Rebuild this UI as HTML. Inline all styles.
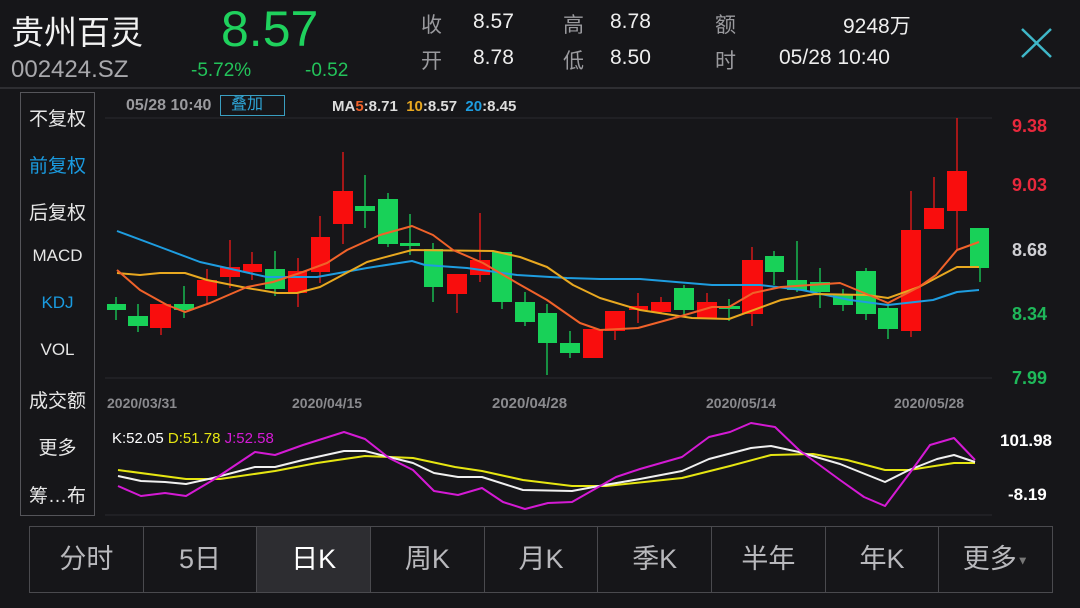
<!DOCTYPE html>
<html><head><meta charset="utf-8"><style>
*{margin:0;padding:0;box-sizing:border-box}
body{width:1080px;height:608px;background:#161619;overflow:hidden;position:relative;font-family:"Liberation Sans","Noto Sans CJK SC",sans-serif;color:#fff}
.a{position:absolute;white-space:nowrap}
.menu{position:absolute;left:20px;top:92px;width:75px;height:424px;border:1px solid #55555a}
.menu div{position:absolute;left:0;width:73px;text-align:center;font-size:19px;color:#e6e6e6}
.tabs{position:absolute;left:29px;top:526px;width:1024px;height:67px;border:1px solid #4a4a4e;display:flex}
.tabs div{flex:1;border-right:1px solid #4a4a4e;text-align:center;line-height:65px;font-size:27px;color:#b8b8bc}
.tabs div:last-child{border-right:none}
.tabs .sel{background:#2d2d31;color:#fff}
</style></head><body>
<div class="a" style="left:11px;top:6px;font-size:33px;color:#f2f2f2">贵州百灵</div>
<div class="a" style="left:11px;top:56px;font-size:24px;color:#a8a8ac">002424.SZ</div>
<div class="a" style="left:221px;top:0px;font-size:50px;color:#1fd15d">8.57</div>
<div class="a" style="left:191px;top:60px;font-size:19px;color:#23c35a">-5.72%</div>
<div class="a" style="left:305px;top:60px;font-size:19px;color:#23c35a">-0.52</div>
<div class="a" style="left:421px;top:9px;font-size:21px;color:#9a9a9e">收</div>
<div class="a" style="left:473px;top:10px;font-size:21px;color:#eee">8.57</div>
<div class="a" style="left:421px;top:45px;font-size:21px;color:#9a9a9e">开</div>
<div class="a" style="left:473px;top:46px;font-size:21px;color:#eee">8.78</div>
<div class="a" style="left:563px;top:9px;font-size:21px;color:#9a9a9e">高</div>
<div class="a" style="left:610px;top:10px;font-size:21px;color:#eee">8.78</div>
<div class="a" style="left:563px;top:45px;font-size:21px;color:#9a9a9e">低</div>
<div class="a" style="left:610px;top:46px;font-size:21px;color:#eee">8.50</div>
<div class="a" style="left:715px;top:9px;font-size:21px;color:#9a9a9e">额</div>
<div class="a" style="left:843px;top:10px;font-size:21px;color:#eee">9248万</div>
<div class="a" style="left:715px;top:45px;font-size:21px;color:#9a9a9e">时</div>
<div class="a" style="left:779px;top:46px;font-size:21px;color:#eee">05/28 10:40</div>
<svg class="a" style="left:1020px;top:27px" width="34" height="32"><path d="M2 2L31 30M31 2L2 30" stroke="#3fb7c8" stroke-width="2.5"/></svg>
<div class="a" style="left:0;top:87px;width:1080px;height:2px;background:#2e2e32"></div>

<div class="menu">
<div style="top:11px">不复权</div>
<div style="top:58px;color:#1a9be0">前复权</div>
<div style="top:105px">后复权</div>
<div style="top:153px;font-size:17px">MACD</div>
<div style="top:200px;font-size:17px;color:#1a9be0">KDJ</div>
<div style="top:247px;font-size:17px">VOL</div>
<div style="top:293px">成交额</div>
<div style="top:340px">更多</div>
<div style="top:388px">筹…布</div>
</div>

<div class="a" style="left:126px;top:97px;font-size:16px;font-weight:bold;color:#9a9a9e">05/28 10:40</div>
<div class="a" style="left:220px;top:95px;width:65px;height:21px;border:1px solid #3a9ec0;color:#2ea5d6;font-size:16px;line-height:18px;padding-left:10px">叠加</div>
<div class="a" style="left:332px;top:98px;font-size:15px;font-weight:bold;color:#ddd">MA<span style="color:#f0622a">5</span>:8.71&nbsp;&nbsp;<span style="color:#e8a820">10</span>:8.57&nbsp;&nbsp;<span style="color:#1e9de0">20</span>:8.45</div>

<svg class="a" style="left:0;top:0" width="1080" height="608">
<line x1="105" y1="118" x2="992" y2="118" stroke="#2a2a2e"/>
<line x1="105" y1="378" x2="992" y2="378" stroke="#2a2a2e"/>
<line x1="105" y1="515" x2="992" y2="515" stroke="#2a2a2e"/>
<g stroke-width="1.3">
<g stroke="#18d158">
<line x1="116" y1="297" x2="116" y2="320"/><line x1="138" y1="304" x2="138" y2="332"/><line x1="184" y1="286" x2="184" y2="318"/>
<line x1="275" y1="251" x2="275" y2="296"/><line x1="365" y1="175" x2="365" y2="228"/><line x1="388" y1="193" x2="388" y2="247"/>
<line x1="410" y1="214" x2="410" y2="255"/><line x1="433" y1="243" x2="433" y2="302"/><line x1="502" y1="252" x2="502" y2="309"/>
<line x1="525" y1="292" x2="525" y2="326"/><line x1="547" y1="304" x2="547" y2="375"/><line x1="570" y1="331" x2="570" y2="358"/>
<line x1="684" y1="285" x2="684" y2="317"/><line x1="729" y1="299" x2="729" y2="321"/><line x1="774" y1="251" x2="774" y2="285"/>
<line x1="797" y1="241" x2="797" y2="292"/><line x1="820" y1="268" x2="820" y2="308"/><line x1="843" y1="289" x2="843" y2="311"/>
<line x1="866" y1="268" x2="866" y2="320"/><line x1="888" y1="305" x2="888" y2="339"/><line x1="980" y1="228" x2="980" y2="282"/>
</g>
<g stroke="#f01818">
<line x1="161" y1="304" x2="161" y2="335"/><line x1="207" y1="269" x2="207" y2="305"/><line x1="230" y1="240" x2="230" y2="288"/>
<line x1="252" y1="252" x2="252" y2="280"/><line x1="298" y1="258" x2="298" y2="307"/><line x1="320" y1="216" x2="320" y2="283"/>
<line x1="343" y1="152" x2="343" y2="244"/><line x1="457" y1="274" x2="457" y2="313"/><line x1="480" y1="213" x2="480" y2="282"/>
<line x1="593" y1="329" x2="593" y2="358"/><line x1="615" y1="311" x2="615" y2="340"/><line x1="638" y1="293" x2="638" y2="323"/>
<line x1="661" y1="297" x2="661" y2="314"/><line x1="707" y1="293" x2="707" y2="319"/><line x1="752" y1="247" x2="752" y2="326"/>
<line x1="911" y1="191" x2="911" y2="337"/><line x1="934" y1="177" x2="934" y2="229"/><line x1="957" y1="118" x2="957" y2="250"/>
</g>
</g>
<g fill="#18d158">
<rect x="107" y="304" width="19" height="6"/><rect x="128" y="316" width="20" height="10"/><rect x="174" y="304" width="20" height="6"/>
<rect x="265" y="269" width="20" height="20"/><rect x="355" y="206" width="20" height="5"/><rect x="378" y="199" width="20" height="45"/>
<rect x="400" y="243" width="20" height="3"/><rect x="424" y="249" width="19" height="38"/><rect x="492" y="252" width="20" height="50"/>
<rect x="515" y="302" width="20" height="20"/><rect x="538" y="313" width="19" height="30"/><rect x="560" y="343" width="20" height="10"/>
<rect x="674" y="288" width="20" height="22"/><rect x="719" y="306" width="21" height="3"/><rect x="765" y="256" width="19" height="16"/>
<rect x="787" y="280" width="20" height="10"/><rect x="810" y="282" width="20" height="10"/><rect x="833" y="294" width="20" height="11"/>
<rect x="856" y="271" width="20" height="43"/><rect x="878" y="308" width="20" height="21"/><rect x="970" y="228" width="19" height="40"/>
</g>
<g fill="#f90d0d">
<rect x="150" y="304" width="21" height="24"/><rect x="197" y="280" width="20" height="16"/><rect x="220" y="267" width="20" height="10"/>
<rect x="243" y="264" width="19" height="8"/><rect x="288" y="271" width="19" height="22"/><rect x="311" y="237" width="19" height="35"/>
<rect x="333" y="191" width="20" height="33"/><rect x="447" y="274" width="20" height="20"/><rect x="470" y="260" width="20" height="15"/>
<rect x="583" y="329" width="20" height="29"/><rect x="605" y="311" width="20" height="20"/><rect x="629" y="306" width="19" height="4"/>
<rect x="651" y="302" width="20" height="10"/><rect x="697" y="302" width="20" height="17"/><rect x="742" y="260" width="21" height="54"/>
<rect x="901" y="230" width="20" height="101"/><rect x="924" y="208" width="20" height="21"/><rect x="947" y="171" width="20" height="40"/>
</g>
<g fill="none" stroke-width="2" stroke-linejoin="round">
<polyline stroke="#1e9de0" points="117,231 160,247 200,262 267,277 317,277 367,268 412,261 425,265 467,268 517,275 567,278 600,279 640,279 712,285 760,285 802,290 850,300 888,305 933,300 957,292 979,290"/>
<polyline stroke="#e8a820" points="117,273 140,275 160,273 185,273 207,280 247,288 277,293 297,293 320,287 367,262 412,250 493,251 520,257 547,267 573,285 600,298 640,310 692,318 729,319 781,300 815,294 867,295 888,298 919,287 957,267 979,267"/>
<polyline stroke="#f0622a" points="117,270 140,290 167,305 185,312 210,303 247,287 273,282 300,273 327,263 347,250 380,235 412,226 433,235 453,250 483,263 517,283 547,300 580,323 600,330 638,328 678,317 712,307 729,307 753,293 781,287 840,283 857,290 888,303 919,287 936,275 957,250 979,242"/>
</g>
<g font-family="Liberation Sans,sans-serif" font-weight="bold" font-size="18">
<text x="1012" y="132" fill="#e8283c">9.38</text>
<text x="1012" y="191" fill="#e8283c">9.03</text>
<text x="1012" y="256" fill="#d0d0d4">8.68</text>
<text x="1012" y="320" fill="#1fb85a">8.34</text>
<text x="1012" y="384" fill="#1fb85a">7.99</text>
</g>
<g font-family="Liberation Sans,sans-serif" font-weight="bold" font-size="14" fill="#8a8a8e">
<text x="107" y="408">2020/03/31</text><text x="292" y="408">2020/04/15</text><text x="492" y="408" font-size="15">2020/04/28</text>
<text x="706" y="408">2020/05/14</text><text x="894" y="408">2020/05/28</text>
</g>
<text x="112" y="443" font-family="Liberation Sans,sans-serif" font-size="15"><tspan fill="#fff">K:52.05 </tspan><tspan fill="#e6e612">D:51.78 </tspan><tspan fill="#d61ad6">J:52.58</tspan></text>
<text x="1000" y="446" font-family="Liberation Sans,sans-serif" font-weight="bold" font-size="17" fill="#fff">101.98</text>
<text x="1008" y="500" font-family="Liberation Sans,sans-serif" font-weight="bold" font-size="17" fill="#fff">-8.19</text>
<g fill="none" stroke-width="2" stroke-linejoin="round">
<polyline stroke="#e6e612" points="118,470 186,479 220,479 275,471 317,463 365,456 413,458 455,467 482,471 523,480 572,486 606,486 682,478 730,466 771,455 813,454 847,460 885,470 909,470 954,463 975,463"/>
<polyline stroke="#f0f0f0" points="118,476 141,481 165,482 186,484 213,478 255,467 275,467 303,460 344,451 365,451 389,457 413,463 434,473 458,477 482,477 523,490 572,491 599,486 640,479 682,471 709,459 751,448 771,446 799,452 840,464 885,482 909,470 937,459 954,455 975,462"/>
<polyline stroke="#d41ad4" points="118,486 141,496 165,493 186,496 213,480 255,452 275,455 303,445 344,432 365,439 389,458 413,470 434,491 458,495 482,488 503,502 525,509 548,503 572,502 616,477 640,469 682,457 709,437 730,432 751,423 775,427 799,450 840,480 864,497 885,506 912,470 930,445 954,438 975,460"/>
</g>
</svg>

<div class="tabs">
<div>分时</div><div>5日</div><div class="sel">日K</div><div>周K</div><div>月K</div><div>季K</div><div>半年</div><div>年K</div><div>更多<span style="font-size:12px;color:#777;vertical-align:middle">▼</span></div>
</div>
</body></html>
